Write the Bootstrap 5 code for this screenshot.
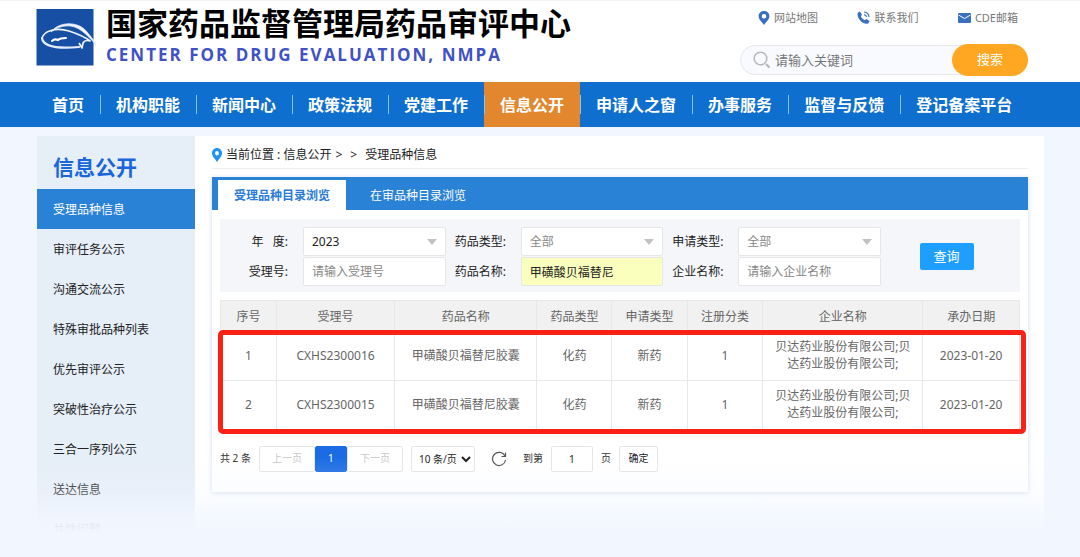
<!DOCTYPE html>
<html lang="zh-CN">
<head>
<meta charset="utf-8">
<meta name="viewport" content="width=device-width, initial-scale=1">
<title>国家药品监督管理局药品审评中心</title>
<link href="https://cdn.jsdelivr.net/npm/bootstrap@5.3.0/dist/css/bootstrap.min.css" rel="stylesheet">
<style>
  body { font-family: "Noto Sans", "Noto Sans CJK SC", sans-serif; font-size: 12px; line-height: 17px; color: #333; background: #f2f7ff; }
  a { text-decoration: none; }
  .site-wrap { padding-left: 36px; padding-right: 36px; }
  .site-header { background: #fff; border-top: 1px solid #f2f3f5; height: 82px; }
  .site-names { margin-left: 12px; padding-top: 4px; }
  .site-title { font-family: "Noto Sans CJK SC", sans-serif; font-size: 31px; line-height: 34px; font-weight: 700; color: #000; }
  .site-subtitle { font-size: 17px; line-height: 31px; font-weight: 700; letter-spacing: 2px; color: #4152c4; font-family: "Open Sans", sans-serif; }
  .tools { width: 288px; }
  .tool-links { font-size: 11px; padding: 0 10px 0 18px; }
  .tool-links a { color: #777; }
  .site-search { height: 32px; }
  .search-box { height: 30px; border: 1px solid #e6e8ee; border-radius: 15px; background: #f9faff; padding: 0 40px 0 12px; margin-right: -24px; }
  .search-box input { font-size: 13px; line-height: 18px; }
  .search-box input::placeholder { color: #777; opacity: 1; }
  .search-btn { width: 76px; height: 32px; border-radius: 16px; background: #ffa722; color: #fff; font-size: 13px; z-index: 1; }
  .main-nav { background: #0f6fcf; height: 45px; }
  .main-nav a { font-family: "Noto Sans CJK SC", sans-serif; font-size: 16px; line-height: 45px; font-weight: 700; color: #fff; padding: 0 16px; position: relative; }
  .main-nav li + li a::before { content: ""; position: absolute; left: 0; top: 13px; height: 19px; width: 1px; background: #8fc0f2; }
  .main-nav a.current { background: #e2872d; }
  .page-body { margin-top: 9px; position: relative; padding-left: 37px; }
  .page-body::after { content: ""; position: absolute; left: 0; right: 0; bottom: -8px; height: 100px; pointer-events: none; background: linear-gradient(rgba(242,247,255,0), rgba(242,247,255,.25) 35%, rgba(242,247,255,.88) 63%, #f2f7ff 76%); }
  .side { width: 158px; background: #e6eef8; }
  .side h2 { font-family: "Noto Sans CJK SC", sans-serif; font-size: 21px; line-height: 30px; font-weight: 700; color: #1a66dc; margin: 0; padding: 15px 16px 8px; }
  .side a { display: block; line-height: 38px; padding: 2px 0 0 16px; color: #222; }
  .side a.current { background: #2a82d7; color: #fff; }
  .content-pane { background: #fff; padding: 0 16px 0 17px; }
  .crumb { height: 33px; border-bottom: 1px solid #eee; padding-top: 5px; color: #222; }
  .crumb a { color: #222; }
  .panel { margin-top: 8px; box-shadow: 0 1px 5px rgba(120,150,200,.35); padding-bottom: 20px; }
  .tabs { background: #2a82d7; height: 33px; padding: 3px 6px 0; }
  .tabs button { border: 0; background: none; padding: 2px 16px 0; line-height: 28px; color: #fff; }
  .tabs button.current { background: #fff; color: #2a7bd7; font-weight: 700; margin-right: 8px; }
  .filters { margin: 9px 8px 0; padding: 8px 0 6px; background: #f5f6fa; display: grid; grid-template-columns: 83px 1fr 75px 1fr 75px 1fr 139px; row-gap: 1px; }
  .filters label { padding: 6px 0 0 9px; color: #222; }
  .filters label.first { padding: 6px 15px 0 0; text-align: right; white-space: pre; }
  .filters .form-control, .filters .form-select { height: 29px; border: 1px solid #e6e6e6; border-radius: 2px; font-size: 12px; line-height: 17px; padding: 5px 8px; color: #222; background-color: #fff; }
  .filters .form-select { --bs-form-select-bg-img: url("data:image/svg+xml,%3Csvg xmlns='http://www.w3.org/2000/svg' viewBox='0 0 10 6'%3E%3Cpath d='M0 0h10L5 6z' fill='%23c2c2c2'/%3E%3C/svg%3E"); background-size: 10px 6px; background-position: right 8px center; }
  .filters .form-select.unset { color: #888; }
  .filters .form-control.filled { background-color: #faffbd; }
  .filters .form-control::placeholder { color: #888; opacity: 1; }
  .query-cell { grid-column: 7; grid-row: 1 / span 2; }
  .query-btn { width: 54px; height: 27px; padding: 0; border-radius: 2px; background: #1e9fff; color: #fff; font-size: 13px; }
  .result { margin: 8px 8px 0; position: relative; }
  .result table { table-layout: fixed; color: #666; text-align: center; margin: 0; border-color: #e8e8e8; font-size: 12px; --bs-table-color: #666; --bs-table-bg: transparent; }
  .result th { height: 31px; padding: 0; font-weight: 400; vertical-align: middle; background: #f1f1f1; color: #666; }
  .result td { height: 49px; padding: 0 10px 2px; vertical-align: middle; color: #666; }
  .highlight { position: absolute; left: -2px; right: -6px; top: 30px; bottom: -4px; border: 5px solid #fb2116; border-radius: 5px; pointer-events: none; }
  .pager { margin: 15px 8px 0; font-size: 10px; height: 27px; color: #333; }
  .pager button, .pager select, .pager input { height: 26px; border: 1px solid #e5e5e5; border-radius: 2px; background-color: #fff; padding: 0; color: #222; font-size: 10px; text-align: center; }
  .pager .step { width: 56px; color: #c8c8c8; }
  .pager .num { width: 32px; background: #1a6be4; border-color: #1a6be4; color: #fff; }
  .pager select { width: 64px; padding-left: 3px; text-align: left; }
  .pager input { width: 42px; }
  .pager .reload { border: 0; width: 16px; height: 16px; line-height: 0; background: none; }
  .pager .ok { width: 39px; }
</style>
</head>
<body>
<header class="site-header">
  <div class="site-wrap d-flex justify-content-between">
    <div class="d-flex">
      <svg class="mt-2" width="58" height="57" viewBox="0 0 58 57" overflow="visible" aria-hidden="true">
        <rect x=".5" width="57" height="56.500" fill="#174fa4"/>
        <path d="M15 23C23 12 43 12 51 23C55 28 59 32 60 36C55 30 51 26 46 22C37 15 25 15 15 23Z" fill="#f4f7fd" stroke="#dbe6f7" stroke-width=".800"/>
        <path d="M6 30C7 22 20 18 33 22C42 25 48 27 54 32C51 31 48 32 47 34L46 39L43 34" fill="none" stroke="#eef3fc" stroke-width="1.700" stroke-linejoin="round"/>
        <path d="M6 29C7 37 20 40 43 38" fill="none" stroke="#e4ecfa" stroke-width="2.200" stroke-linecap="round"/>
        <path d="M16 32C18 30 20 30 22 31C24 29 27 29 30 29" fill="none" stroke="#fff" stroke-width="2" stroke-linecap="round"/>
      </svg>
      <div class="site-names">
        <div class="site-title">国家药品监督管理局药品审评中心</div>
        <div class="site-subtitle">CENTER FOR DRUG EVALUATION, NMPA</div>
      </div>
    </div>
    <div class="tools me-3 pt-2">
      <div class="tool-links d-flex justify-content-between">
        <a href="#" class="d-flex align-items-center gap-1"><svg width="12" height="14" viewBox="0 0 12 14"><path fill-rule="evenodd" d="M6 0C2.800 0 .6 2.200 .6 5.200C.6 8.500 4 11 6 14C8 11 11.400 8.500 11.400 5.200C11.400 2.200 9.200 0 6 0ZM6 3a2.300 2.300 0 1 1 0 4.600A2.300 2.300 0 0 1 6 3Z" fill="#3b6fc0"/></svg>网站地图</a>
        <a href="#" class="d-flex align-items-center gap-1"><svg width="13" height="13" viewBox="0 0 13 13"><path d="M.8 1.800L2.800.5L5 3.800L3.900 5.300C4.600 6.900 5.900 8.200 7.700 9.200L9.200 7.900L12.500 10L11.200 12.400C6 14-.8 7 .8 1.800Z" fill="#3b6fc0"/><path d="M7 1C9.800 1.200 11.700 3.200 12 6M7 3.600C8.400 3.800 9.300 4.700 9.500 6" stroke="#3b6fc0" stroke-width="1.200" fill="none"/></svg>联系我们</a>
        <a href="#" class="d-flex align-items-center gap-1"><svg width="13" height="10" viewBox="0 0 13 10"><rect width="13" height="10" rx="1" fill="#3b6fc0"/><path d="M.5 2L6.500 5.500L12.500 2" stroke="#fff" fill="none"/></svg>CDE邮箱</a>
      </div>
      <form class="site-search d-flex align-items-center mt-3" role="search" onsubmit="return false" style="padding-top:3px">
        <div class="search-box d-flex align-items-center flex-grow-1">
          <svg class="flex-shrink-0" width="18" height="18" viewBox="0 0 18 18" fill="none" stroke="#b9b9b9"><circle cx="7.500" cy="7.500" r="6.300" stroke-width="1.600"/><path d="M13 13L16.500 16.500" stroke-width="2.200"/></svg>
          <input class="border-0 bg-transparent w-100 p-0 ms-1" type="search" aria-label="关键词" placeholder="请输入关键词">
        </div>
        <button class="search-btn border-0 position-relative flex-shrink-0" type="submit">搜索</button>
      </form>
    </div>
  </div>
</header>
<nav class="main-nav">
  <ul class="site-wrap list-unstyled d-flex m-0">
    <li><a class="d-block" href="#">首页</a></li>
    <li><a class="d-block" href="#">机构职能</a></li>
    <li><a class="d-block" href="#">新闻中心</a></li>
    <li><a class="d-block" href="#">政策法规</a></li>
    <li><a class="d-block" href="#">党建工作</a></li>
    <li><a class="d-block current" href="#">信息公开</a></li>
    <li><a class="d-block" href="#">申请人之窗</a></li>
    <li><a class="d-block" href="#">办事服务</a></li>
    <li><a class="d-block" href="#">监督与反馈</a></li>
    <li><a class="d-block" href="#">登记备案平台</a></li>
  </ul>
</nav>
<div class="page-body site-wrap d-flex">
  <aside class="side flex-shrink-0">
    <h2>信息公开</h2>
    <a class="current" href="#">受理品种信息</a>
    <a href="#">审评任务公示</a>
    <a href="#">沟通交流公示</a>
    <a href="#">特殊审批品种列表</a>
    <a href="#">优先审评公示</a>
    <a href="#">突破性治疗公示</a>
    <a href="#">三合一序列公示</a>
    <a href="#">送达信息</a>
    <a href="#">共性问题</a>
  </aside>
  <main class="content-pane flex-grow-1">
    <div class="crumb d-flex align-items-center">
      <svg class="me-1" width="10" height="14" viewBox="0 0 12 14" preserveAspectRatio="none"><path fill-rule="evenodd" d="M6 0C2.800 0 0 2.200 0 5.200C0 8.500 4 11 6 14C8 11 12 8.500 12 5.200C12 2.200 9.200 0 6 0ZM6 3a2.300 2.300 0 1 1 0 4.600A2.300 2.300 0 0 1 6 3Z" fill="#1e93f5"/></svg>
      <span>当前位置 : <a href="#">信息公开</a></span><span class="ms-1">&gt;</span><span class="mx-1 px-1">&gt;</span><span>受理品种信息</span>
    </div>
    <section class="panel">
      <div class="tabs d-flex">
        <button type="button" class="current">受理品种目录浏览</button>
        <button type="button">在审品种目录浏览</button>
      </div>
      <form class="filters" onsubmit="return false">
        <label class="first" for="year">年   度:</label>
        <select class="form-select" id="year"><option>2023</option></select>
        <label for="drugType">药品类型:</label>
        <select class="form-select unset" id="drugType"><option>全部</option></select>
        <label for="applyType">申请类型:</label>
        <select class="form-select unset" id="applyType"><option>全部</option></select>
        <label class="first" for="acceptNo">受理号:</label>
        <input class="form-control" id="acceptNo" type="text" placeholder="请输入受理号">
        <label for="drugName">药品名称:</label>
        <input class="form-control filled" id="drugName" type="text" value="甲磺酸贝福替尼">
        <label for="company">企业名称:</label>
        <input class="form-control" id="company" type="text" placeholder="请输入企业名称">
        <div class="query-cell d-flex align-items-center justify-content-center pe-2">
          <button class="query-btn btn" type="submit">查询</button>
        </div>
      </form>
      <div class="result">
        <table class="table table-bordered">
          <colgroup><col style="width:7%"><col style="width:14.800%"><col style="width:17.800%"><col style="width:9.400%"><col style="width:9.400%"><col style="width:9.500%"><col style="width:20%"><col style="width:12.100%"></colgroup>
          <thead><tr><th>序号</th><th>受理号</th><th>药品名称</th><th>药品类型</th><th>申请类型</th><th>注册分类</th><th>企业名称</th><th>承办日期</th></tr></thead>
          <tbody>
            <tr><td>1</td><td>CXHS2300016</td><td>甲磺酸贝福替尼胶囊</td><td>化药</td><td>新药</td><td>1</td><td>贝达药业股份有限公司;贝达药业股份有限公司;</td><td>2023-01-20</td></tr>
            <tr><td>2</td><td>CXHS2300015</td><td>甲磺酸贝福替尼胶囊</td><td>化药</td><td>新药</td><td>1</td><td>贝达药业股份有限公司;贝达药业股份有限公司;</td><td>2023-01-20</td></tr>
          </tbody>
        </table>
        <div class="highlight"></div>
      </div>
      <div class="pager d-flex align-items-center gap-2">
        <span>共 2 条</span>
        <div class="d-flex">
          <button type="button" class="step" disabled>上一页</button>
          <button type="button" class="num">1</button>
          <button type="button" class="step" disabled>下一页</button>
        </div>
        <select aria-label="每页条数"><option>10 条/页</option></select>
        <button type="button" class="reload mx-2" aria-label="刷新"><svg width="16" height="16" viewBox="0 0 16 16" fill="none" stroke="#555" stroke-width="1.200"><path d="M14 5A6.600 6.600 0 1 0 14.600 9M14.500 1.500V5.500H10.500"/></svg></button>
        <label for="jump">到第</label>
        <input id="jump" type="text" value="1">
        <span>页</span>
        <button type="button" class="ok">确定</button>
      </div>
    </section>
  </main>
</div>
<script src="https://cdn.jsdelivr.net/npm/bootstrap@5.3.0/dist/js/bootstrap.bundle.min.js"></script>
</body>
</html>
